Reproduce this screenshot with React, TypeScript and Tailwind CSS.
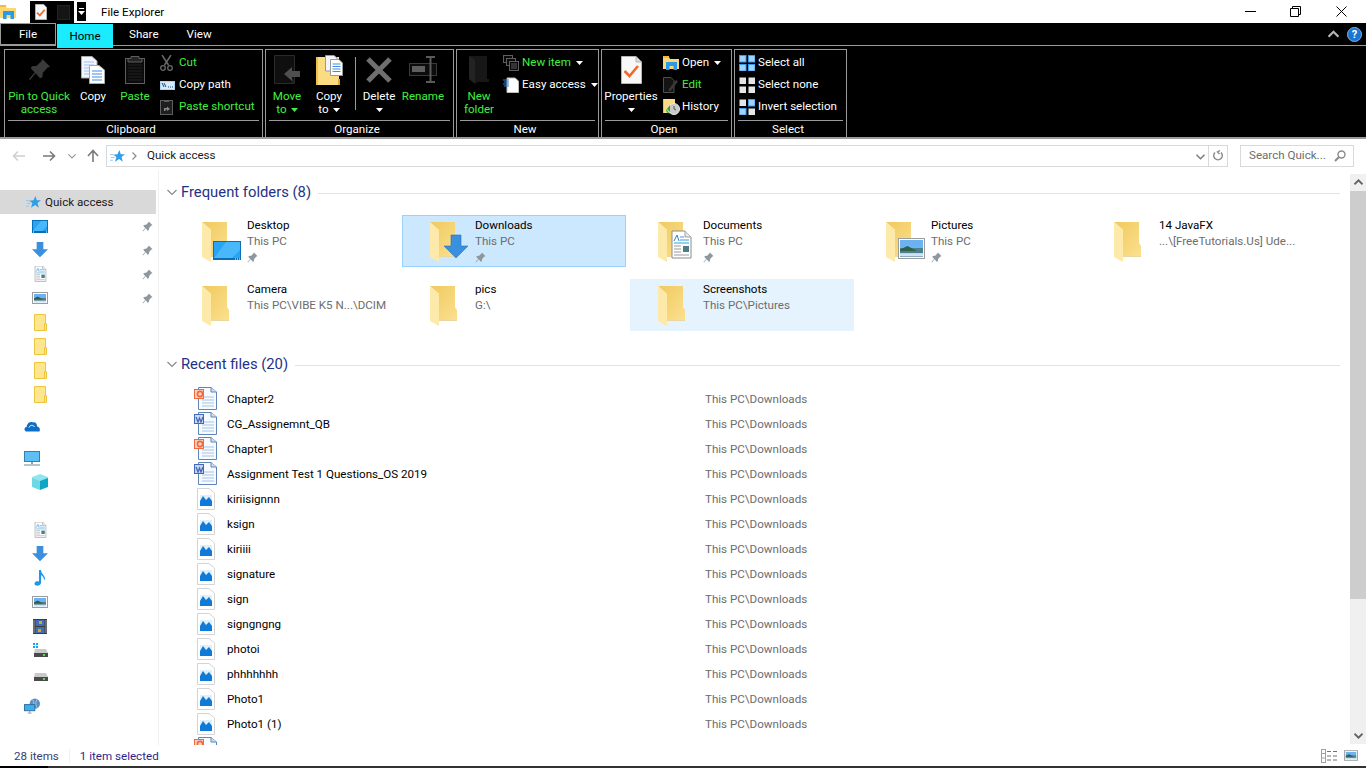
import React from 'react'

const GREEN = 'text-[#3ff23f]'

function Folder({ overlay, className = '' }: { overlay?: React.ReactNode; className?: string }) {
  return (
    <svg width="42" height="42" viewBox="0 0 42 42" className={`overflow-visible ${className}`}>
      <defs>
        <linearGradient id="fmain" x1="0" y1="0" x2="1" y2="1">
          <stop offset="0" stopColor="#f0c95f" />
          <stop offset="1" stopColor="#fbe08e" />
        </linearGradient>
      </defs>
      <path d="M0 0H25V21L27 24V34H9V8Z" fill="url(#fmain)" />
      <path d="M0 0L9 8V40L0 35Z" fill="#fde9a9" />
      <path d="M9 34H27V35H9Z" fill="#e9d6a3" />
      {overlay}
    </svg>
  )
}

const OverlayDesktop = (
  <g>
    <rect x="11" y="19" width="28" height="19" fill="#0b6fb8" />
    <path d="M12 20H38V36H12Z" fill="#27a4f5" />
    <path d="M12 36L24 20H38V28L30 36Z" fill="#48b8fb" />
    <path d="M33 37H38" stroke="#fff" strokeDasharray="1 1" />
  </g>
)

function ArrowDownShape({ fill = '#3a8fdf' }: { fill?: string }) {
  return <path d="M7 0H17V11H24L12 23L0 11H7Z" fill={fill} />
}

const OverlayDownload = (
  <g transform="translate(14 13)">
    <path d="M7 0H17V11H24L12 23L0 11H7Z" fill="#3a8fdf" stroke="#2a73bd" strokeWidth="0.6" />
  </g>
)

function DocLines() {
  return (
    <g>
      <path d="M1 0H14L20 6V27H1Z" fill="#fff" stroke="#8c8c8c" />
      <path d="M14 0V6H20" fill="#e8e8e8" stroke="#a0a0a0" />
      <path d="M3 10L6 4L8 10" stroke="#2f7fd6" fill="none" />
      <path d="M9 6H13M9 9H18M3 12H18" stroke="#2f9fe0" />
      <path d="M3 15H10M3 18H10M3 21H10M3 24H18" stroke="#9a9a9a" />
      <rect x="12" y="15" width="6" height="6" fill="#4d7d86" />
    </g>
  )
}

function PictureArt({ w, h }: { w: number; h: number }) {
  return (
    <g>
      <rect x="0.5" y="0.5" width={w - 1} height={h - 1} fill="#fff" stroke="#9c9c9c" />
      <rect x="2" y="2" width={w - 4} height={(h - 4) * 0.45} fill="#6cb2f0" />
      <rect x="2" y={2 + (h - 4) * 0.45} width={w - 4} height={(h - 4) * 0.55} fill="#4b7f92" />
      <path d={`M2 ${h * 0.55}L${w * 0.35} ${h * 0.38}L${w * 0.7} ${h * 0.62}H2Z`} fill="#2f5f45" />
      <rect x="2" y={h * 0.72} width={w - 4} height={h * 0.16} fill="#cfe3f0" />
    </g>
  )
}

function Pin({ size = 13, color = '#8f979e' }: { size?: number; color?: string }) {
  return (
    <svg width={size} height={size} viewBox="0 0 24 24">
      <path d="M15 1L23 9L20.5 10L15.5 15.5L15 20L12.5 21L8 16L2 23L1 22L7 15L3 11L4 8.5L9 8L14 3.5Z" fill={color} />
    </svg>
  )
}

function Chevron({ dir = 'down', color = '#7a7a7a', size = 10, width = 1.2 }: { dir?: 'down' | 'up'; color?: string; size?: number; width?: number }) {
  return (
    <svg width={size} height={size} viewBox="0 0 10 10">
      <path d={dir === 'down' ? 'M0.5 3L5 7.5L9.5 3' : 'M0.5 7L5 2.5L9.5 7'} stroke={color} strokeWidth={width} fill="none" />
    </svg>
  )
}

function Caret() {
  return (
    <svg width="7" height="4" viewBox="0 0 7 4" className="inline-block">
      <path d="M0 0H7L3.5 4Z" fill="currentColor" />
    </svg>
  )
}

function ExplorerIcon({ w = 17, h = 14 }: { w?: number; h?: number }) {
  return (
    <svg width={w} height={h} viewBox="0 0 17 14">
      <path d="M0 1H6L7 3H16V13H0Z" fill="#fbd873" />
      <path d="M0 0H6V2H0Z" fill="#f0bc3c" />
      <path d="M3 6H14V14H10.5V10H6.5V14H3Z" fill="#2a9be8" />
    </svg>
  )
}

function Star({ size = 16 }: { size?: number }) {
  return (
    <svg width={size} height={size} viewBox="0 0 16 16">
      <path d="M10 1L11.5 5.5H16L12.3 8.5L13.7 13.5L9.7 10.7L5.3 13.5L6.8 8.5L3.5 6L8 5.5Z" fill="#2f9ee8" />
      <path d="M0 6H4M1 9H5M0 12H3" stroke="#8cc8f0" />
    </svg>
  )
}

function SmallFolderTab() {
  return (
    <svg width="13" height="17" viewBox="0 0 13 17">
      <path d="M0.5 0.5H11.5V16.5H0.5Z" fill="#fde68f" stroke="#eec53e" />
      <path d="M10.5 9.5H12.5V16.5H10.5Z" fill="#fde68f" stroke="#eec53e" />
    </svg>
  )
}

const BlueScreen = (
  <svg width="16" height="13" viewBox="0 0 16 13">
    <rect width="16" height="13" fill="#0b6fb8" />
    <path d="M1 1H15V11H1Z" fill="#27a4f5" />
    <path d="M1 11L9 1H15V6L10 11Z" fill="#48b8fb" />
    <path d="M1 12H2M14 12H15" stroke="#fff" />
  </svg>
)
const BlueArrow = (
  <svg width="16" height="16" viewBox="0 0 24 24">
    <ArrowDownShape />
  </svg>
)
const SmallDoc = (
  <svg width="13" height="16" viewBox="0 0 21 28">
    <DocLines />
  </svg>
)
const SmallPicture = (
  <svg width="16" height="12" viewBox="0 0 16 12">
    <PictureArt w={16} h={12} />
  </svg>
)
const Cube = (
  <svg width="16" height="16" viewBox="0 0 16 16">
    <path d="M8 0L16 3V5L8 8L0 5V3Z" fill="#8fe6ee" />
    <path d="M0 4L8 7V16L0 13Z" fill="#6fd7e4" />
    <path d="M16 4L8 7V16L16 13Z" fill="#0fa5c5" />
  </svg>
)
const Cloud = (
  <svg width="16" height="11" viewBox="0 0 16 11">
    <path d="M3 10.5C0 10.5 -0.5 6.5 2.5 6C3 2 6.5 0 9 1.5C11 0.5 13.5 3 13 5.5C15.5 5.5 16.5 8.5 15.5 10.5Z" fill="#0f6fc6" />
    <path d="M5 6.5C6 4 9 3.5 10.5 6" stroke="#fff" fill="none" />
  </svg>
)
const Monitor = (
  <svg width="16" height="15" viewBox="0 0 16 15">
    <rect x="0.5" y="0.5" width="15" height="10" fill="#5cc0f5" stroke="#3a7fa8" />
    <path d="M7 11H9V13H7Z" fill="#8aa0ae" />
    <path d="M0 14H16" stroke="#9fb0bb" strokeWidth="1.5" />
  </svg>
)
const Music = (
  <svg width="12" height="16" viewBox="0 0 12 16">
    <path d="M5 0H7C7 4 11 5 11 9L10 10C10 7 8 6 7 5V13C7 15 4 16 2 15.5C0 15 0 12.5 2 11.5C3 11 4.5 11 5 11.5Z" fill="#1998ef" />
  </svg>
)
const Film = (
  <svg width="14" height="15" viewBox="0 0 14 15">
    <rect width="14" height="15" fill="#3c3c3c" />
    <path d="M1 1.5V14M13 1.5V14" stroke="#fff" strokeDasharray="1 1" />
    <rect x="2.5" y="1" width="9" height="6" fill="#3f6fb5" />
    <rect x="2.5" y="8" width="9" height="6" fill="#3f6fb5" />
    <path d="M6 2H9V5H6ZM5 10H8V13H5Z" fill="#d9a326" />
  </svg>
)
function Drive({ win }: { win?: boolean }) {
  return (
    <svg width="15" height="14" viewBox="0 0 15 14">
      {win && <path d="M0 0H2V2H0ZM3 0H5V2H3ZM0 3H2V5H0ZM3 3H5V5H3Z" fill="#14a5ee" />}
      <path d="M2 6H13L15 10H1Z" fill="#c9c9c9" />
      <rect x="1" y="10" width="14" height="4" fill="#4a4a4a" />
      <rect x="10" y="11" width="2" height="2" fill="#4ce04c" />
    </svg>
  )
}
const Network = (
  <svg width="17" height="16" viewBox="0 0 17 16">
    <circle cx="11.5" cy="5.5" r="5.5" fill="#5b8fc0" />
    <path d="M9 1C11 4 11 8 9 10M14 1C12 3 12 8 14 10" stroke="#a9c9e4" fill="none" />
    <rect x="0.5" y="6.5" width="11" height="6.5" fill="#38b0f2" stroke="#2e6f9c" />
    <path d="M4 15.5H8M6 13V15" stroke="#7f97a8" />
  </svg>
)

// ribbon icons
const PinBig = <Pin size={23} color="#3a3a3a" />
const CopyBig = (
  <svg width="24" height="28" viewBox="0 0 24 28">
    <path d="M0.5 0.5H11L16 5V22H0.5Z" fill="#f2f5fb" stroke="#a9a9a9" />
    <path d="M3 6H13M3 9H13M3 12H13M3 15H13M3 18H13" stroke="#9fc0ef" />
    <path d="M8.5 9.5H18L23.5 14V27.5H8.5Z" fill="#fff" stroke="#a9a9a9" />
    <path d="M11 15H21M11 18H21M11 21H21M11 24H21" stroke="#3f8bea" />
  </svg>
)
const PasteBig = (
  <svg width="20" height="29" viewBox="0 0 20 29">
    <rect x="0.5" y="3.5" width="19" height="25" fill="#0b0b0b" stroke="#5e5e5e" />
    <path d="M6 3.5V1.5H14V3.5H17V7H3V3.5Z" fill="#242424" stroke="#5e5e5e" />
    <path d="M3 10H17M3 13H17M3 16H17M3 19H17M3 22H17M3 25H17" stroke="#232323" />
  </svg>
)
const Scissors = (
  <svg width="13" height="16" viewBox="0 0 13 16">
    <path d="M2 0L8.5 10M11 0L4.5 10" stroke="#6a6a6a" strokeWidth="1.5" />
    <circle cx="3" cy="13" r="2.3" stroke="#6a6a6a" strokeWidth="1.3" fill="none" />
    <circle cx="10" cy="13" r="2.3" stroke="#6a6a6a" strokeWidth="1.3" fill="none" />
  </svg>
)
const CopyPath = (
  <svg width="15" height="9" viewBox="0 0 15 9">
    <rect width="15" height="9" fill="#a9d2f5" />
    <rect x="1" y="1" width="13" height="7" fill="#d6eafa" />
    <path d="M2 2L4 6M4 2L6 6M8 6H9M10 6H11M12 6H13" stroke="#22466b" />
  </svg>
)
const PasteShortcut = (
  <svg width="13" height="16" viewBox="0 0 13 16">
    <rect x="0.5" y="1.5" width="12" height="14" fill="#1e1e1e" stroke="#5e5e5e" />
    <path d="M4 1H9V3H4Z" fill="#5e5e5e" />
    <path d="M4 12V9H7V7.5L10 10L7 12V10.5H5.5V12Z" fill="#8a8a8a" />
  </svg>
)
const MoveTo = (
  <svg width="27" height="29" viewBox="0 0 27 29">
    <path d="M0.5 0.5H20.5V28.5H0.5Z" fill="#0f0f0f" stroke="#2a2a2a" />
    <path d="M18 28H21V24H18Z" fill="#222" />
    <path d="M10 22L18 15V19H26V25H18V29Z" fill="#4f4f4f" transform="translate(0 -3)" />
  </svg>
)
const CopyTo = (
  <svg width="27" height="30" viewBox="0 0 27 30">
    <path d="M0 2H23V30H0Z" fill="#fbdc82" />
    <path d="M0 2H2V30H0Z" fill="#eec14a" />
    <path d="M22 24H24V30H22Z" fill="#d8a93c" />
    <path d="M9.5 0.5H18L21 3V16H9.5Z" fill="#f2f5fb" stroke="#9a9a9a" />
    <path d="M14.5 4.5H23L26.5 8V20.5H14.5Z" fill="#fff" stroke="#9a9a9a" />
    <path d="M16.5 9H24.5M16.5 11.5H24.5M16.5 14H24.5M16.5 16.5H24.5" stroke="#3f8bea" />
  </svg>
)
const DeleteX = (
  <svg width="26" height="26" viewBox="0 0 26 26">
    <path d="M2 2L24 24M24 2L2 24" stroke="#6f6f6f" strokeWidth="5" />
  </svg>
)
const Rename = (
  <svg width="29" height="27" viewBox="0 0 29 27">
    <rect x="0.5" y="7.5" width="27" height="12" fill="#0c0c0c" stroke="#3a3a3a" />
    <rect x="3" y="10" width="13" height="6" fill="#5e5e5e" />
    <path d="M17 1H26M17 26H26M21.5 1V26" stroke="#5a5a5a" strokeWidth="2" />
  </svg>
)
const NewFolderIcon = (
  <svg width="20" height="28" viewBox="0 0 20 28">
    <path d="M0 0H18V23H20V26H8V28L0 23Z" fill="#171717" />
    <path d="M0 0L6 4V28L0 23Z" fill="#232323" />
  </svg>
)
const NewItem = (
  <svg width="16" height="16" viewBox="0 0 16 16">
    <rect x="0.5" y="0.5" width="9" height="7" fill="#0a0a0a" stroke="#5f5f5f" />
    <rect x="3.5" y="3.5" width="9" height="7" fill="#0a0a0a" stroke="#5f5f5f" />
    <rect x="6.5" y="6.5" width="9" height="9" fill="#0a0a0a" stroke="#5f5f5f" />
    <path d="M8 9H14M8 11H14M8 13H14" stroke="#5f5f5f" />
  </svg>
)
const EasyAccess = (
  <svg width="16" height="16" viewBox="0 0 16 16">
    <path d="M4 1H12L15.5 4V15.5H4Z" fill="#fff" stroke="#bcbcbc" />
    <path d="M0 3H6M1 5H6M0 7H6M1 9H6" stroke="#2f7fd6" />
  </svg>
)
const Properties = (
  <svg width="21" height="28" viewBox="0 0 21 28">
    <path d="M0.5 0.5H15L20.5 6V27.5H0.5Z" fill="#f8f8f8" stroke="#b5b5b5" />
    <path d="M15 0.5V6H20.5" fill="#dcdcdc" stroke="#b5b5b5" />
    <path d="M3.5 15L8.5 20L17 10" stroke="#f26a2a" strokeWidth="2.6" fill="none" />
  </svg>
)
const Edit = (
  <svg width="15" height="16" viewBox="0 0 15 16">
    <path d="M0.5 0.5H8L11 3.5V15.5H0.5Z" fill="#141414" stroke="#4f4f4f" />
    <path d="M6 12L13 3L15 4.5L8 13.5L5.5 14.5Z" fill="#3a3a3a" />
  </svg>
)
const History = (
  <svg width="17" height="16" viewBox="0 0 17 16">
    <path d="M0 0H12V14H0Z" fill="#fbdc82" />
    <path d="M0 0H1V14H0Z" fill="#eec14a" />
    <circle cx="11" cy="10" r="5.5" fill="#c9c9c9" stroke="#e8e8e8" />
    <path d="M11 7V10L13 11" stroke="#555" fill="none" />
    <path d="M4 10L7 6V13Z M3 10A5 5 0 0 0 7 15" fill="#2fa339" />
  </svg>
)
function Grid4({ cells }: { cells: string[] }) {
  const spots = [[0, 0], [9, 0], [0, 9], [9, 9]]
  return (
    <svg width="16" height="16" viewBox="0 0 16 16">
      {cells.map((c, i) => (
        <rect key={i} x={spots[i][0] + (c === 'b' ? 0.5 : 1)} y={spots[i][1] + (c === 'b' ? 0.5 : 1)} width={c === 'b' ? 6.5 : 5.5} height={c === 'b' ? 6.5 : 5.5} fill={c === 'b' ? '#9fd3fb' : '#e6e6e6'} stroke={c === 'b' ? '#3b9af0' : '#e6e6e6'} />
      ))}
    </svg>
  )
}

function LargeButton({ w, icon, lines, green, caret, iconH = 37 }: { w: number; icon: React.ReactNode; lines: string[]; green?: boolean; caret?: boolean; iconH?: number }) {
  return (
    <div className={`flex flex-col items-center shrink-0 text-[11.6px] leading-[13px] ${green ? GREEN : 'text-white'}`} style={{ width: w }}>
      <div className="flex justify-center items-center" style={{ height: iconH }}>
        {icon}
      </div>
      <div className="whitespace-nowrap mt-[2px]">{lines[0]}</div>
      {lines[1] !== undefined && (
        <div className="whitespace-nowrap flex items-center gap-[4px] h-[13px]">
          {lines[1] && <span>{lines[1]}</span>}
          {caret && <Caret />}
        </div>
      )}
    </div>
  )
}

function SmallButton({ icon, label, green, caret }: { icon: React.ReactNode; label: string; green?: boolean; caret?: boolean }) {
  return (
    <div className={`flex items-center h-[22px] text-[11.6px] whitespace-nowrap ${green ? GREEN : 'text-white'}`}>
      <div className="w-[19px] shrink-0 flex justify-start">{icon}</div>
      <span>{label}</span>
      {caret && <span className="ml-[5px] text-white flex"><Caret /></span>}
    </div>
  )
}

function Group({ label, w, children }: { label: string; w: number; children: React.ReactNode }) {
  return (
    <div className="border border-[#9a9a9a] flex flex-col shrink-0 h-[89px]" style={{ width: w }}>
      <div className="flex h-[71px] pt-[1px]">{children}</div>
      <div className="mx-[3px] border-t border-[#9a9a9a] text-center text-white text-[11.6px] leading-[15px] pt-[1px] pr-[5px]">{label}</div>
    </div>
  )
}

function Tile({ name, sub, pinned, overlay, state }: { name: string; sub: string; pinned?: boolean; overlay?: React.ReactNode; state?: 'selected' | 'hover' }) {
  const bg = state === 'selected' ? 'bg-[#cce8ff] border-[#99d1ff]' : state === 'hover' ? 'bg-[#e5f3ff] border-[#e5f3ff]' : 'border-transparent'
  return (
    <div className={`h-[52px] w-[224px] border flex ${bg}`}>
      <div className="w-[72px] pl-[27px] pt-[6px] shrink-0">
        <Folder overlay={overlay} />
      </div>
      <div className="text-[11.6px] leading-[16px] pt-[1px] whitespace-nowrap">
        <div className="text-black">{name}</div>
        <div className="text-[#6d6d6d]">{sub}</div>
        {pinned && <div className="h-[16px] flex items-center"><Pin size={11} /></div>}
      </div>
    </div>
  )
}

function FileIcon({ kind }: { kind: 'pdf' | 'word' | 'wordold' | 'image' }) {
  if (kind === 'image') {
    return (
      <svg width="24" height="22" viewBox="0 0 24 22">
        <path d="M3.5 0.5H15L20.5 5V21.5H3.5Z" fill="#fff" stroke="#d4d4d4" />
        <path d="M6 7H18V18H6Z" fill="#0f7ad8" />
        <path d="M6 13L9 8L12 12L15 9L18 13V7H6Z" fill="#dff0fb" />
      </svg>
    )
  }
  const tile = kind === 'pdf' ? '#f2683c' : '#4468b8'
  return (
    <svg width="24" height="23" viewBox="0 0 24 23">
      <path d="M4.5 0.5H17L22.5 5V22.5H4.5Z" fill="#f7fbff" stroke="#5f86b8" />
      <path d="M17 0.5V5H22.5" fill="#cfe0f2" stroke="#5f86b8" />
      <path d="M8 10H20M8 13H20M8 16H20M8 19H20" stroke="#a5c3e4" />
      <rect x="0.5" y="2.5" width="9" height="9" fill={kind === 'wordold' ? '#c9d5ee' : kind === 'word' ? '#cfdaf0' : '#fbd2c2'} stroke={tile} />
      {kind === 'pdf' && <circle cx="6" cy="7" r="2.6" fill="none" stroke={tile} strokeWidth="1.6" />}
      {kind !== 'pdf' && <path d="M2 5L4 10L5.5 6L7 10L9 5" fill="none" stroke={tile} strokeWidth="1.3" />}
    </svg>
  )
}

function SectionHeader({ title }: { title: string }) {
  return (
    <div className="h-[24px] flex items-center pl-[8px]">
      <Chevron color="#8a8a8a" />
      <span className="ml-[4px] text-[14.8px] text-[#1e3287] whitespace-nowrap">{title}</span>
      <div className="flex-1 border-t border-[#e3e3e3] ml-[7px] mt-[2px] mr-[10px]" />
    </div>
  )
}

const recent: [string, 'pdf' | 'word' | 'wordold' | 'image'][] = [
  ['Chapter2', 'pdf'],
  ['CG_Assignemnt_QB', 'word'],
  ['Chapter1', 'pdf'],
  ['Assignment Test 1 Questions_OS 2019', 'wordold'],
  ['kiriisignnn', 'image'],
  ['ksign', 'image'],
  ['kiriiii', 'image'],
  ['signature', 'image'],
  ['sign', 'image'],
  ['signgngng', 'image'],
  ['photoi', 'image'],
  ['phhhhhhh', 'image'],
  ['Photo1', 'image'],
  ['Photo1 (1)', 'image'],
  ['', 'pdf'],
]

function NavRow({ icon, indent = 32, pinned }: { icon: React.ReactNode; indent?: number; pinned?: boolean }) {
  return (
    <div className="h-[24px] relative flex items-center">
      <div className="w-[16px] flex justify-center" style={{ marginLeft: indent }}>{icon}</div>
      {pinned && <div className="ml-auto mr-[5px] flex"><Pin size={11} /></div>}
    </div>
  )
}

export default function App() {
  return (
    <div className="w-[1366px] h-[768px] overflow-hidden bg-white flex flex-col font-['Roboto','Noto_Sans',sans-serif] text-[11.6px]">
      {/* title bar */}
      <div className="h-[23px] flex shrink-0 items-start">
        <div className="w-[30px] pt-[5px]"><ExplorerIcon /></div>
        <div className="w-[44px] h-[22px] mt-[1px] bg-black flex items-center">
          <div className="ml-[5px] flex"><svg width="12" height="16" viewBox="0 0 21 28"><path d="M0.5 0.5H15L20.5 6V27.5H0.5Z" fill="#f8f8f8" stroke="#b5b5b5" /><path d="M3.5 15L8.5 20L17 10" stroke="#f26a2a" strokeWidth="3" fill="none" /></svg></div>
          <div className="ml-[10px] w-[13px] h-[15px] bg-[#151515] border border-[#222]" />
        </div>
        <div className="ml-[2px] mt-[1px] w-[11px] h-[21px] bg-black border border-white flex flex-col items-center justify-center text-white">
          <div className="w-[5px] h-[1px] bg-white mb-[2px]" />
          <Caret />
        </div>
        <div className="ml-[14px] h-[23px] leading-[24px] text-black">File Explorer</div>
        <div className="ml-auto flex h-[23px] items-center">
          <svg width="11" height="11" viewBox="0 0 11 11" className="mr-[34px]"><path d="M0 5.5H11" stroke="#000" /></svg>
          <svg width="11" height="11" viewBox="0 0 11 11" className="mr-[35px]"><path d="M0.5 2.5H8.5V10.5H0.5ZM2.5 2.5V0.5H10.5V8.5H8.5" stroke="#000" fill="none" /></svg>
          <svg width="11" height="11" viewBox="0 0 11 11" className="mr-[19px]"><path d="M0.5 0.5L10.5 10.5M10.5 0.5L0.5 10.5" stroke="#000" /></svg>
        </div>
      </div>

      {/* tabs */}
      <div className="h-[23px] bg-black flex shrink-0 text-white relative">
        <div className="w-[56px] border border-b-2 border-[#9a9a9a] pt-[2px] flex items-center justify-center">File</div>
        <div className="ml-[1px] w-[56px] h-[24px] mt-[1px] pt-[1px] bg-[#1aebff] text-black flex items-center justify-center">Home</div>
        <div className="flex-1 border-b border-[#9a9a9a] flex items-center pt-[2px]">
          <span className="ml-[16px]">Share</span>
          <span className="ml-[28px]">View</span>
          <div className="ml-auto flex items-center mr-[4px] mb-[2px]">
            <Chevron dir="up" color="#b5b5b5" size={11} width={2} />
            <div className="ml-[8px] w-[15px] h-[15px] rounded-full bg-[#1b75d0] border border-[#7fb4e8] flex items-center justify-center text-white text-[11px] font-bold leading-none">?</div>
          </div>
        </div>
      </div>

      {/* ribbon */}
      <div className="h-[93px] bg-black border-b-2 border-[#9a9a9a] flex shrink-0 pl-[4px] pt-[3px] gap-[2px]">
        <Group label="Clipboard" w={259}>
          <LargeButton w={68} icon={PinBig} lines={['Pin to Quick', 'access']} green />
          <LargeButton w={40} icon={CopyBig} lines={['Copy']} />
          <LargeButton w={44} icon={PasteBig} lines={['Paste']} green />
          <div className="ml-[3px] pt-[1px]">
            <SmallButton icon={Scissors} label="Cut" green />
            <SmallButton icon={CopyPath} label="Copy path" />
            <SmallButton icon={PasteShortcut} label="Paste shortcut" green />
          </div>
        </Group>
        <Group label="Organize" w={189}>
          <LargeButton w={42} icon={MoveTo} lines={['Move', 'to']} green caret />
          <LargeButton w={42} icon={CopyTo} lines={['Copy', 'to']} caret />
          <div className="ml-[5px] mr-[2px] mt-[6px] mb-[10px] w-[1px] bg-[#9a9a9a]" />
          <LargeButton w={42} icon={DeleteX} lines={['Delete', '']} caret />
          <LargeButton w={46} icon={Rename} lines={['Rename']} green />
        </Group>
        <Group label="New" w={143}>
          <LargeButton w={44} icon={NewFolderIcon} lines={['New', 'folder']} green />
          <div className="ml-[2px] pt-[1px]">
            <SmallButton icon={NewItem} label="New item" green caret />
            <SmallButton icon={EasyAccess} label="Easy access" caret />
          </div>
        </Group>
        <Group label="Open" w={131}>
          <LargeButton w={58} icon={Properties} lines={['Properties', '']} caret />
          <div className="ml-[3px] pt-[1px]">
            <SmallButton icon={<ExplorerIcon />} label="Open" caret />
            <SmallButton icon={Edit} label="Edit" green />
            <SmallButton icon={History} label="History" />
          </div>
        </Group>
        <Group label="Select" w={113}>
          <div className="ml-[4px] pt-[1px]">
            <SmallButton icon={<Grid4 cells={['b', 'b', 'b', 'b']} />} label="Select all" />
            <SmallButton icon={<Grid4 cells={['w', 'w', 'w', 'w']} />} label="Select none" />
            <SmallButton icon={<Grid4 cells={['w', 'b', 'b', 'w']} />} label="Invert selection" />
          </div>
        </Group>
      </div>

      {/* address bar */}
      <div className="h-[31px] flex items-center shrink-0 pt-[3px]">
        <div className="w-[106px] flex items-center shrink-0">
          <svg width="14" height="12" viewBox="0 0 14 12" className="ml-[12px]"><path d="M13 6H2M6 1.5L1.5 6L6 10.5" stroke="#d0d0d0" strokeWidth="1.6" fill="none" /></svg>
          <svg width="14" height="12" viewBox="0 0 14 12" className="ml-[16px]"><path d="M1 6H12M8 1.5L12.5 6L8 10.5" stroke="#7a7a7a" strokeWidth="1.6" fill="none" /></svg>
          <div className="ml-[12px]"><Chevron color="#9a9a9a" size={8} width={1.5} /></div>
          <svg width="14" height="14" viewBox="0 0 14 14" className="ml-[10px]"><path d="M7 13V2M2 7L7 1.5L12 7" stroke="#7a7a7a" strokeWidth="1.6" fill="none" /></svg>
        </div>
        <div className="w-[1122px] h-[22px] border border-[#d9d9d9] flex items-center shrink-0">
          <div className="ml-[3px] flex"><Star size={15} /></div>
          <svg width="5" height="8" viewBox="0 0 5 8" className="ml-[7px]"><path d="M0.5 0.5L4 4L0.5 7.5" stroke="#8a8a8a" strokeWidth="1.2" fill="none" /></svg>
          <span className="ml-[10px] text-[#1a1a1a]">Quick access</span>
          <div className="ml-auto mr-[3px]"><Chevron color="#7a7a7a" size={9} width={1.6} /></div>
          <div className="w-[1px] h-[20px] bg-[#d9d9d9]" />
          <svg width="12" height="12" viewBox="0 0 12 12" className="mx-[3px]"><path d="M3 2.5A4.3 4.3 0 1 0 9 2.5M8 0.5L5.5 2L7.5 4" stroke="#8a8a8a" strokeWidth="1.4" fill="none" /></svg>
        </div>
        <div className="ml-[12px] w-[114px] h-[22px] border border-[#d9d9d9] flex items-center shrink-0">
          <span className="ml-[8px] text-[#6d6d6d] whitespace-nowrap">Search Quick...</span>
          <svg width="12" height="12" viewBox="0 0 12 12" className="ml-auto mr-[7px]"><circle cx="7.5" cy="4.5" r="3.5" stroke="#8a8a8a" strokeWidth="1.4" fill="none" /><path d="M5 7L1 11" stroke="#8a8a8a" strokeWidth="2" /></svg>
        </div>
      </div>

      {/* main */}
      <div className="flex-1 flex min-h-0">
        <div className="w-[159px] shrink-0 border-r border-[#f0f0f0] pt-[20px]">
          <div className="h-[24px] w-[156px] bg-[#d9d9d9] flex items-center">
            <div className="ml-[26px] flex"><Star size={15} /></div>
            <span className="ml-[4px] pt-[1px] text-[#1a1a1a]">Quick access</span>
          </div>
          <NavRow icon={BlueScreen} pinned />
          <NavRow icon={BlueArrow} pinned />
          <NavRow icon={SmallDoc} pinned />
          <NavRow icon={SmallPicture} pinned />
          <NavRow icon={<SmallFolderTab />} />
          <NavRow icon={<SmallFolderTab />} />
          <NavRow icon={<SmallFolderTab />} />
          <NavRow icon={<SmallFolderTab />} />
          <div className="h-[8px]" />
          <NavRow icon={Cloud} indent={24} />
          <div className="h-[8px]" />
          <NavRow icon={Monitor} indent={24} />
          <NavRow icon={Cube} />
          <NavRow icon={null} />
          <NavRow icon={SmallDoc} />
          <NavRow icon={BlueArrow} />
          <NavRow icon={Music} />
          <NavRow icon={SmallPicture} />
          <NavRow icon={Film} />
          <NavRow icon={<Drive win />} />
          <NavRow icon={<Drive />} />
          <div className="h-[8px]" />
          <NavRow icon={Network} indent={24} />
        </div>

        <div className="flex-1 min-w-0 overflow-hidden pt-[10px]">
          <SectionHeader title="Frequent folders (8)" />
          <div className="ml-[15px] mt-[11px] grid grid-cols-[repeat(5,224px)] gap-x-[4px] gap-y-[12px]">
            <Tile name="Desktop" sub="This PC" pinned overlay={OverlayDesktop} />
            <Tile name="Downloads" sub="This PC" pinned overlay={OverlayDownload} state="selected" />
            <Tile name="Documents" sub="This PC" pinned overlay={<g transform="translate(13 9)"><DocLines /></g>} />
            <Tile name="Pictures" sub="This PC" pinned overlay={<g transform="translate(12 16)"><PictureArt w={27} h={21} /></g>} />
            <Tile name="14 JavaFX" sub="...\[FreeTutorials.Us] Ude..." />
            <Tile name="Camera" sub="This PC\VIBE K5 N...\DCIM" />
            <Tile name="pics" sub="G:\" />
            <Tile name="Screenshots" sub="This PC\Pictures" state="hover" />
          </div>
          <div className="mt-[21px]">
            <SectionHeader title="Recent files (20)" />
          </div>
          <div className="mt-[10px]">
            {recent.map(([name, kind], i) => (
              <div key={i} className="h-[25px] flex items-center pl-[35px]">
                <div className="w-[33px] shrink-0 flex"><FileIcon kind={kind} /></div>
                <div className="w-[478px] shrink-0 pt-[2px] text-black">{name}</div>
                {name && <div className="pt-[2px] text-[#6d6d6d]">This PC\Downloads</div>}
              </div>
            ))}
          </div>
        </div>

        <div className="w-[16px] shrink-0 mt-[4px] mb-[1px] bg-[#f0f0f0] flex flex-col items-center">
          <div className="h-[17px] flex items-center"><Chevron dir="up" color="#606060" size={9} width={2} /></div>
          <div className="w-full h-[408px] bg-[#cdcdcd]" />
          <div className="mt-auto h-[17px] flex items-center"><Chevron color="#606060" size={9} width={2} /></div>
        </div>
      </div>

      {/* status bar */}
      <div className="h-[21px] shrink-0 flex items-center">
        <span className="ml-[14px] pt-[2px] text-[#3c3c6e]">28 items</span>
        <div className="ml-[10px] w-[1px] h-[14px] bg-[#f0f0f0]" />
        <span className="ml-[10px] pt-[2px] text-[#2f1f8c]">1 item selected</span>
        <div className="ml-auto flex items-center mr-[8px]">
          <svg width="17" height="14" viewBox="0 0 17 14"><rect x="0.5" y="0.5" width="4" height="13" fill="#fff" stroke="#a0a0a0" /><path d="M0 4.5H5M0 9H5" stroke="#a0a0a0" /><path d="M6 2.5H10M12 2.5H16M6 7H10M12 7H16M6 11H10M12 11H16" stroke="#707070" /></svg>
          <svg width="14" height="11" viewBox="0 0 16 12" className="ml-[6px]"><PictureArt w={16} h={12} /></svg>
        </div>
      </div>
      <div className="h-[2px] shrink-0 flex">
        <div className="w-[48px] bg-black" />
        <div className="flex-1 bg-[#333333]" />
      </div>
    </div>
  )
}
